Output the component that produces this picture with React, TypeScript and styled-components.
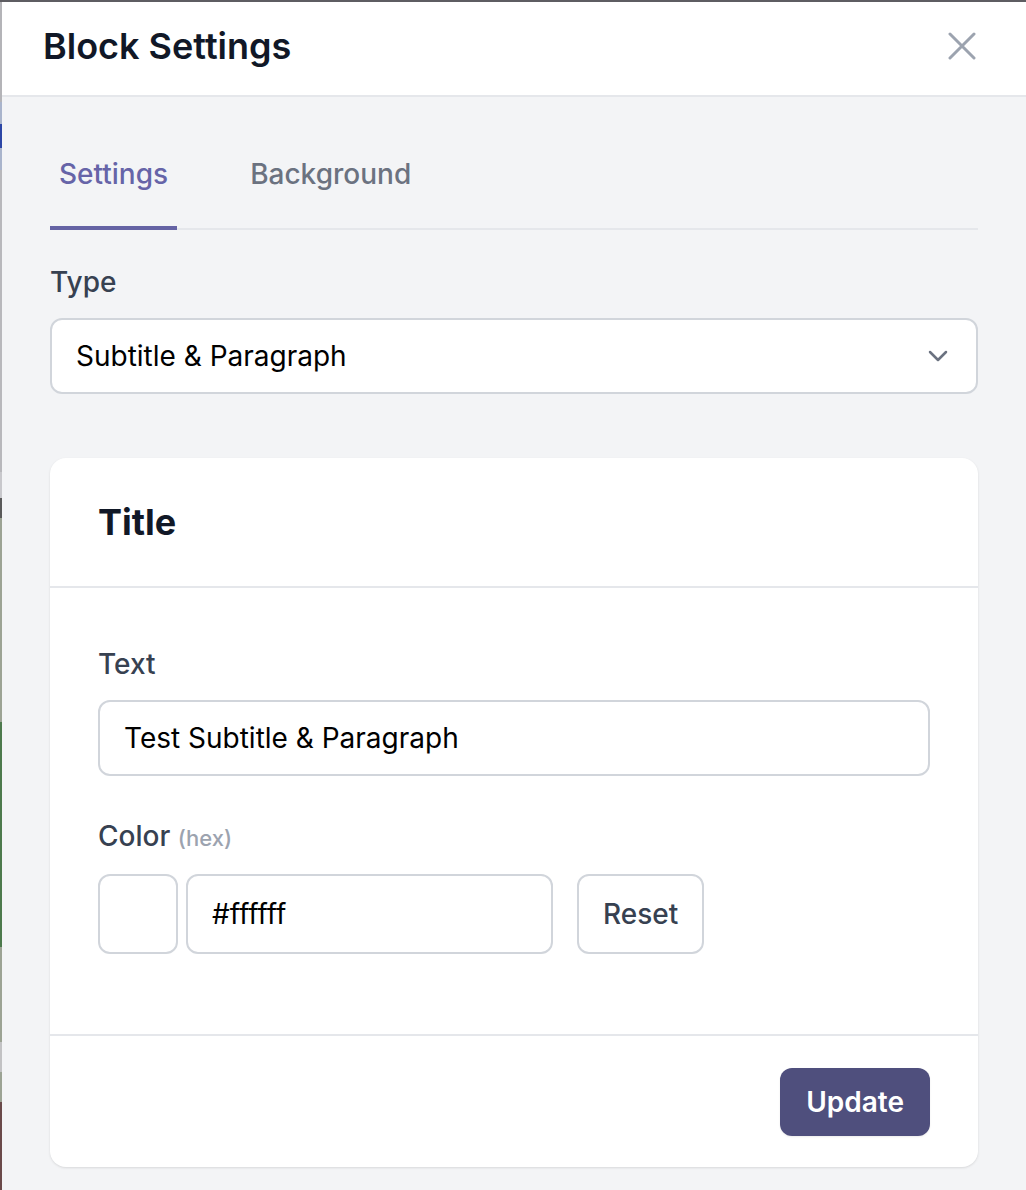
import React from 'react';
import styled, { createGlobalStyle } from 'styled-components';

const GlobalStyle = createGlobalStyle`
	html, body {
		margin: 0;
		padding: 0;
		background: #f3f4f6;
	}
	* {
		box-sizing: border-box;
	}
	body {
		font-family: Inter, 'Noto Sans', 'Liberation Sans', sans-serif;
		-webkit-font-smoothing: antialiased;
	}
`;

const App = () => {
	return (
		<>
			<GlobalStyle />
			<Frame>
				<TopEdge />
				<Row>
					<Backdrop />
					<Panel>
						<Header>
							<HeaderTitle>Block Settings</HeaderTitle>
							<CloseButton aria-label="Close">
								<svg width="28" height="28" viewBox="0 0 28 28" fill="none">
									<path
										d="M2 2L26 26M26 2L2 26"
										stroke="#9ca3af"
										strokeWidth="3"
										strokeLinecap="round"
									/>
								</svg>
							</CloseButton>
						</Header>

						<Body>
							<Tabs>
								<Tab active>Settings</Tab>
								<Tab>Background</Tab>
							</Tabs>

							<Field>
								<Label>Type</Label>
								<Select>
									<span>Subtitle &amp; Paragraph</span>
									<svg width="20" height="12" viewBox="0 0 20 12" fill="none">
										<path
											d="M2 2L10 10L18 2"
											stroke="#6b7280"
											strokeWidth="2.5"
											strokeLinecap="round"
											strokeLinejoin="round"
										/>
									</svg>
								</Select>
							</Field>

							<Card>
								<CardHeader>
									<CardTitle>Title</CardTitle>
								</CardHeader>
								<CardBody>
									<Field>
										<Label>Text</Label>
										<Input>Test Subtitle &amp; Paragraph</Input>
									</Field>
									<Field spaced>
										<Label>
											Color <Hint>(hex)</Hint>
										</Label>
										<ColorRow>
											<Swatch color="#ffffff" />
											<HexInput>#ffffff</HexInput>
											<GhostButton>Reset</GhostButton>
										</ColorRow>
									</Field>
								</CardBody>
								<CardFooter>
									<PrimaryButton>Update</PrimaryButton>
								</CardFooter>
							</Card>
						</Body>
					</Panel>
				</Row>
			</Frame>
		</>
	);
};

export default App;

const Frame = styled.div`
	display: flex;
	flex-direction: column;
	min-height: 1190px;
`;

const TopEdge = styled.div`
	height: 2px;
	background: #5e5d62;
`;

const Row = styled.div`
	display: flex;
	flex: 1;
`;

// the page behind the drawer, only a sliver shows
const Backdrop = styled.div`
	width: 2px;
	flex-shrink: 0;
	background: linear-gradient(
		to bottom,
		#b4b4b8 0px,
		#b4b4b8 100px,
		#a9b4cc 100px,
		#a9b4cc 122px,
		#2c46a6 122px,
		#2c46a6 146px,
		#a9b4cc 146px,
		#a9b4cc 168px,
		#b8b8bc 168px,
		#b8b8bc 470px,
		#c8c8cc 470px,
		#c8c8cc 496px,
		#5a5a5a 496px,
		#5a5a5a 516px,
		#9ca394 516px,
		#9ca394 720px,
		#4d7a4d 720px,
		#4d7a4d 945px,
		#9ca394 945px,
		#9ca394 1040px,
		#c2c2c4 1040px,
		#c2c2c4 1070px,
		#9ca394 1070px,
		#9ca394 1100px,
		#6a4a4a 1100px,
		#6a4a4a 100%
	);
`;

const Panel = styled.div`
	flex: 1;
	display: flex;
	flex-direction: column;
	background: #f3f4f6;
`;

const Header = styled.div`
	display: flex;
	align-items: center;
	justify-content: space-between;
	height: 95px;
	padding: 0 50px 6px 41px;
	background: #ffffff;
	border-bottom: 2px solid #e5e7eb;
`;

const HeaderTitle = styled.h1`
	margin: 0;
	font-size: 36px;
	line-height: 44px;
	font-weight: 600;
	color: #111827;
`;

const CloseButton = styled.button`
	display: flex;
	padding: 0;
	border: none;
	background: none;
	cursor: pointer;
`;

const Body = styled.div`
	display: flex;
	flex-direction: column;
	padding: 32px 48px 0 48px;
`;

const Tabs = styled.div`
	display: flex;
	gap: 64px;
	border-bottom: 2px solid #e5e7eb;
	margin-bottom: 32px;
`;

const Tab = styled.div<{ active?: boolean }>`
	padding: 25px 9px 32px;
	margin-bottom: -2px;
	font-size: 28px;
	line-height: 40px;
	font-weight: 500;
	color: ${(p) => (p.active ? '#6664a8' : '#6b7280')};
	border-bottom: 4px solid ${(p) => (p.active ? '#6563a4' : 'transparent')};
`;

const Field = styled.div<{ spaced?: boolean }>`
	display: flex;
	flex-direction: column;
	margin-top: ${(p) => (p.spaced ? '40px' : '0')};
`;

const Label = styled.label`
	font-size: 28px;
	line-height: 40px;
	font-weight: 500;
	color: #374151;
	margin-bottom: 16px;
`;

const Hint = styled.span`
	font-size: 22px;
	color: #9ca3af;
`;

const boxBase = `
	display: flex;
	align-items: center;
	height: 76px;
	padding: 0 24px;
	background: #ffffff;
	border: 2px solid #d1d5db;
	border-radius: 12px;
	font-size: 28px;
	color: #000000;
`;

const Select = styled.div`
	${boxBase}
	justify-content: space-between;
	padding-right: 28px;
`;

const Input = styled.div`
	${boxBase}
`;

const Card = styled.div`
	margin-top: 64px;
	background: #ffffff;
	border-radius: 16px;
	box-shadow: 0 1px 3px rgba(0, 0, 0, 0.08), 0 1px 2px rgba(0, 0, 0, 0.04);
	overflow: hidden;
`;

const CardHeader = styled.div`
	padding: 44px 48px;
	border-bottom: 2px solid #e5e7eb;
`;

const CardTitle = styled.h2`
	margin: 0;
	font-size: 36px;
	line-height: 40px;
	font-weight: 700;
	color: #111827;
`;

const CardBody = styled.div`
	padding: 56px 48px 80px;
	border-bottom: 2px solid #e5e7eb;
`;

const ColorRow = styled.div`
	display: flex;
	align-items: center;
	gap: 8px;
	height: 80px;
`;

const Swatch = styled.div<{ color: string }>`
	width: 80px;
	height: 80px;
	background: ${(p) => p.color};
	border: 2px solid #d1d5db;
	border-radius: 12px;
`;

const HexInput = styled.div`
	${boxBase}
	width: 367px;
	height: 80px;
`;

const GhostButton = styled.button`
	height: 80px;
	margin-left: 16px;
	padding: 0 24px;
	background: #ffffff;
	border: 2px solid #d1d5db;
	border-radius: 12px;
	font-family: inherit;
	font-size: 28px;
	font-weight: 500;
	color: #374151;
`;

const CardFooter = styled.div`
	display: flex;
	justify-content: flex-end;
	padding: 32px 48px 31px;
`;

const PrimaryButton = styled.button`
	height: 68px;
	padding: 0 26px;
	background: #4f4f7d;
	border: none;
	border-radius: 12px;
	box-shadow: 0 1px 2px rgba(0, 0, 0, 0.08);
	font-family: inherit;
	font-size: 28px;
	font-weight: 600;
	color: #ffffff;
`;
